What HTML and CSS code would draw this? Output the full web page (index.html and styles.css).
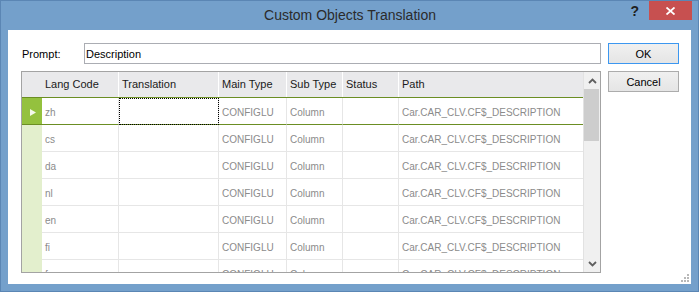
FILE: index.html
```html
<!DOCTYPE html>
<html lang="en">
  <head>
    <meta charset="UTF-8" />
    <meta name="viewport" content="width=device-width, initial-scale=1.0" />
    <title>Custom Objects Translation</title>
    <link rel="stylesheet" href="styles.css">
  </head>
  <body>
    <div class="window">
      <div class="titlebar">
        <span></span>
        <span class="title">Custom Objects Translation</span>
        <div class="controls">
          <span class="help">?</span>
          <span class="close">
            <svg width="9" height="8" viewBox="0 0 9 8">
              <path d="M0.5 0.5 L8.5 7.5 M8.5 0.5 L0.5 7.5" stroke="#fff" stroke-width="1.8" />
            </svg>
          </span>
        </div>
      </div>

      <div class="client">
        <div class="main">
          <div class="prompt-row">
            <label for="prompt">Prompt:</label>
            <input id="prompt" type="text" value="Description">
          </div>

          <div class="grid">
            <div class="grid-body">
              <div class="row head">
                <div class="sel"></div>
                <div class="cell">Lang Code</div>
                <div class="cell">Translation</div>
                <div class="cell">Main Type</div>
                <div class="cell">Sub Type</div>
                <div class="cell">Status</div>
                <div class="cell">Path</div>
              </div>
              <div class="row current">
                <div class="sel">
                  <svg width="6" height="7" viewBox="0 0 6 7"><polygon points="0,0 6,3.5 0,7" fill="#f4f9ea" /></svg>
                </div>
                <div class="cell">zh</div>
                <div class="cell focus"></div>
                <div class="cell">CONFIGLU</div>
                <div class="cell">Column</div>
                <div class="cell"></div>
                <div class="cell">Car.CAR_CLV.CF$_DESCRIPTION</div>
              </div>
              <div class="row">
                <div class="sel"></div>
                <div class="cell">cs</div>
                <div class="cell"></div>
                <div class="cell">CONFIGLU</div>
                <div class="cell">Column</div>
                <div class="cell"></div>
                <div class="cell">Car.CAR_CLV.CF$_DESCRIPTION</div>
              </div>
              <div class="row">
                <div class="sel"></div>
                <div class="cell">da</div>
                <div class="cell"></div>
                <div class="cell">CONFIGLU</div>
                <div class="cell">Column</div>
                <div class="cell"></div>
                <div class="cell">Car.CAR_CLV.CF$_DESCRIPTION</div>
              </div>
              <div class="row">
                <div class="sel"></div>
                <div class="cell">nl</div>
                <div class="cell"></div>
                <div class="cell">CONFIGLU</div>
                <div class="cell">Column</div>
                <div class="cell"></div>
                <div class="cell">Car.CAR_CLV.CF$_DESCRIPTION</div>
              </div>
              <div class="row">
                <div class="sel"></div>
                <div class="cell">en</div>
                <div class="cell"></div>
                <div class="cell">CONFIGLU</div>
                <div class="cell">Column</div>
                <div class="cell"></div>
                <div class="cell">Car.CAR_CLV.CF$_DESCRIPTION</div>
              </div>
              <div class="row">
                <div class="sel"></div>
                <div class="cell">fi</div>
                <div class="cell"></div>
                <div class="cell">CONFIGLU</div>
                <div class="cell">Column</div>
                <div class="cell"></div>
                <div class="cell">Car.CAR_CLV.CF$_DESCRIPTION</div>
              </div>
              <div class="row">
                <div class="sel"></div>
                <div class="cell">fr</div>
                <div class="cell"></div>
                <div class="cell">CONFIGLU</div>
                <div class="cell">Column</div>
                <div class="cell"></div>
                <div class="cell">Car.CAR_CLV.CF$_DESCRIPTION</div>
              </div>
            </div>

            <div class="scrollbar">
              <div class="arrow">
                <svg width="9" height="6" viewBox="0 0 9 6"><polyline points="1,5 4.5,1.5 8,5" fill="none" stroke="#5f5f5f" stroke-width="1.8" /></svg>
              </div>
              <div class="track"><div class="thumb"></div></div>
              <div class="arrow">
                <svg width="9" height="6" viewBox="0 0 9 6"><polyline points="1,1 4.5,4.5 8,1" fill="none" stroke="#5f5f5f" stroke-width="1.8" /></svg>
              </div>
            </div>
          </div>
        </div>

        <div class="buttons">
          <button class="btn default">OK</button>
          <button class="btn">Cancel</button>
        </div>

        <!-- size grip -->
        <svg class="grip" width="8" height="8" viewBox="0 0 8 8">
          <rect x="6" y="0" width="2" height="2" />
          <rect x="3" y="3" width="2" height="2" />
          <rect x="6" y="3" width="2" height="2" />
          <rect x="0" y="6" width="2" height="2" />
          <rect x="3" y="6" width="2" height="2" />
          <rect x="6" y="6" width="2" height="2" />
        </svg>
      </div>
    </div>
  </body>
</html>
```

FILE: styles.css
```css
* {
  margin: 0;
  padding: 0;
  box-sizing: border-box;
}

body {
  font-family: "Liberation Sans", Arial, sans-serif;
  font-size: 11px;
  background-color: #74a0cb;
}

.window {
  width: 699px;
  height: 292px;
  border: 1px solid #5b86b4;
  background-color: #74a0cb;
  padding: 0 7px 7px 7px;
  display: flex;
  flex-direction: column;
}

/* title bar */
.titlebar {
  height: 29px;
  display: grid;
  grid-template-columns: 1fr auto 1fr;
  margin-right: -1px;
}

.title {
  font-size: 14px;
  line-height: 29px;
  color: #2b2b2b;
}

.controls {
  justify-self: end;
  display: flex;
  align-items: flex-start;
}

.help {
  font-size: 14px;
  font-weight: bold;
  line-height: 20px;
  color: #1f1f1f;
  margin-right: 10px;
}

.close {
  width: 43px;
  height: 19px;
  background-color: #c75050;
  display: flex;
  justify-content: center;
  align-items: center;
}

/* dialog body */
.client {
  flex: 1;
  background-color: #fff;
  display: flex;
  padding: 13px 0 0 13px;
  position: relative;
}

.main {
  width: 580px;
  display: flex;
  flex-direction: column;
  gap: 7px;
}

.prompt-row {
  display: flex;
  align-items: center;
}

.prompt-row label {
  width: 63px;
  padding-left: 1px;
  color: #000;
}

.prompt-row input {
  width: 517px;
  height: 21px;
  border: 1px solid #abadb3;
  padding: 0 1px;
  font-family: inherit;
  font-size: 11px;
  color: #000;
  outline: none;
}

.buttons {
  margin-left: 7px;
  display: flex;
  flex-direction: column;
  gap: 7px;
}

.btn {
  width: 71px;
  height: 21px;
  border: 1px solid #acacac;
  background: linear-gradient(#f0f0f0, #e5e5e5);
  font-family: inherit;
  font-size: 11px;
  color: #000;
}

.btn.default {
  border-color: #3c97f0;
}

/* data grid */
.grid {
  height: 202px;
  border: 1px solid #a3a3a3;
  display: flex;
}

.grid-body {
  flex: 1;
  overflow: hidden;
}

.row {
  display: grid;
  grid-template-columns: 20px 77px 100px 68px 56px 56px 1fr;
  height: 27px;
}

.cell {
  border-right: 1px solid #e6e6e6;
  border-bottom: 1px solid #e6e6e6;
  padding: 4px 0 0 3px;
  line-height: 22px;
  font-size: 10px;
  color: #8b8b8b;
  white-space: nowrap;
  overflow: hidden;
}

.cell:last-child {
  border-right: none;
}

.sel {
  background-color: #e3efcd;
  border-bottom: 1px solid #e3efcd;
}

.row.head {
  height: 26px;
  background-color: #e9e9eb;
  border-bottom: 1px solid #6b8e23;
}

.row.head .sel {
  background-color: transparent;
  border: none;
}

.row.head .cell {
  border-right-color: #fff;
  border-bottom: none;
  padding: 0 0 0 3px;
  line-height: 25px;
  font-size: 11px;
  color: #1a1a1a;
}

.row.current .cell,
.row.current .sel {
  border-bottom-color: #6b8e23;
}

.row.current .sel {
  background-color: #94c13e;
  display: flex;
  justify-content: center;
  align-items: center;
  padding: 2px 0 0 1px;
}

.cell.focus {
  outline: 1px dotted #000;
  outline-offset: -1px;
}

.scrollbar {
  width: 17px;
  background-color: #f0f0f0;
  border-left: 1px solid #e2e2e2;
  display: flex;
  flex-direction: column;
}

.arrow {
  height: 17px;
  display: flex;
  justify-content: center;
  align-items: center;
}

.track {
  flex: 1;
}

.thumb {
  width: 15px;
  height: 52px;
  background-color: #cdcdcd;
}

.grip {
  position: absolute;
  right: 2px;
  bottom: 2px;
  fill: #b8b8b8;
}
```
